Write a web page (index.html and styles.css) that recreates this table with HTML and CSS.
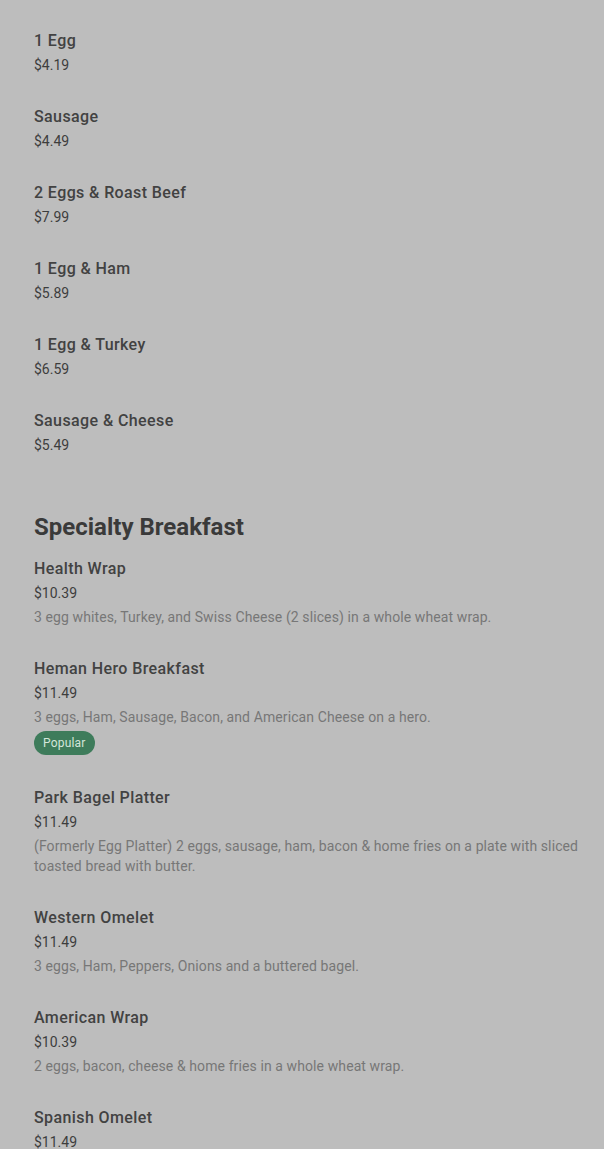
FILE: index.html
```
<!DOCTYPE html>
<html lang="en">

<head>
    <meta charset="UTF-8">
    <title>Menu</title>
    <link rel="stylesheet" href="styles.css">
</head>

<body>
    <div id="menu">
        <div class="section">
            <div class="item">
                <div class="name">1 Egg</div>
                <div class="price">$4.19</div>
            </div>
            <div class="item">
                <div class="name">Sausage</div>
                <div class="price">$4.49</div>
            </div>
            <div class="item">
                <div class="name">2 Eggs &amp; Roast Beef</div>
                <div class="price">$7.99</div>
            </div>
            <div class="item">
                <div class="name">1 Egg &amp; Ham</div>
                <div class="price">$5.89</div>
            </div>
            <div class="item">
                <div class="name">1 Egg &amp; Turkey</div>
                <div class="price">$6.59</div>
            </div>
            <div class="item">
                <div class="name">Sausage &amp; Cheese</div>
                <div class="price">$5.49</div>
            </div>
        </div>

        <div class="section">
            <h2>Specialty Breakfast</h2>
            <div class="item">
                <div class="name">Health Wrap</div>
                <div class="price">$10.39</div>
                <div class="desc">3 egg whites, Turkey, and Swiss Cheese (2 slices) in a whole wheat wrap.</div>
            </div>
            <div class="item">
                <div class="name">Heman Hero Breakfast</div>
                <div class="price">$11.49</div>
                <div class="desc">3 eggs, Ham, Sausage, Bacon, and American Cheese on a hero.</div>
                <span class="badge">Popular</span>
            </div>
            <div class="item">
                <div class="name">Park Bagel Platter</div>
                <div class="price">$11.49</div>
                <div class="desc">(Formerly Egg Platter) 2 eggs, sausage, ham, bacon &amp; home fries on a plate with sliced toasted bread with butter.</div>
            </div>
            <div class="item">
                <div class="name">Western Omelet</div>
                <div class="price">$11.49</div>
                <div class="desc">3 eggs, Ham, Peppers, Onions and a buttered bagel.</div>
            </div>
            <div class="item">
                <div class="name">American Wrap</div>
                <div class="price">$10.39</div>
                <div class="desc">2 eggs, bacon, cheese &amp; home fries in a whole wheat wrap.</div>
            </div>
            <div class="item">
                <div class="name">Spanish Omelet</div>
                <div class="price">$11.49</div>
            </div>
        </div>
    </div>
</body>

</html>
```

FILE: styles.css
```
body {
    margin: 0;
    background-color: #bdbdbd;
    font-family: Roboto, "Liberation Sans", sans-serif;
    color: #3b3b3b;
}

#menu {
    padding: 28px 20px 0 34px;
}

.section {
    display: flex;
    flex-direction: column;
    gap: 29px;
}

.section + .section {
    margin-top: 56px;
}

h2 {
    margin: 0 0 -16px 0;
    font-size: 24px;
    line-height: 32px;
    font-weight: 700;
    letter-spacing: 0;
    color: #3a3a3a;
}

.item {
    display: flex;
    flex-direction: column;
    align-items: flex-start;
}

.name {
    margin-top: 1px;
    font-size: 16px;
    line-height: 24px;
    font-weight: 500;
    letter-spacing: 0.4px;
    color: #424242;
}

.price {
    margin-top: 2px;
    font-size: 14px;
    line-height: 20px;
    color: #3d3d3d;
}

.desc {
    margin-top: 4px;
    font-size: 14px;
    line-height: 20px;
    letter-spacing: 0.1px;
    color: #777777;
}

.badge {
    margin: 4px 0 1px 0;
    padding: 0 9px;
    height: 24px;
    line-height: 24px;
    border-radius: 12px;
    background-color: #3e7c5b;
    color: #d3e6da;
    font-size: 12px;
    letter-spacing: 0.2px;
}
```
